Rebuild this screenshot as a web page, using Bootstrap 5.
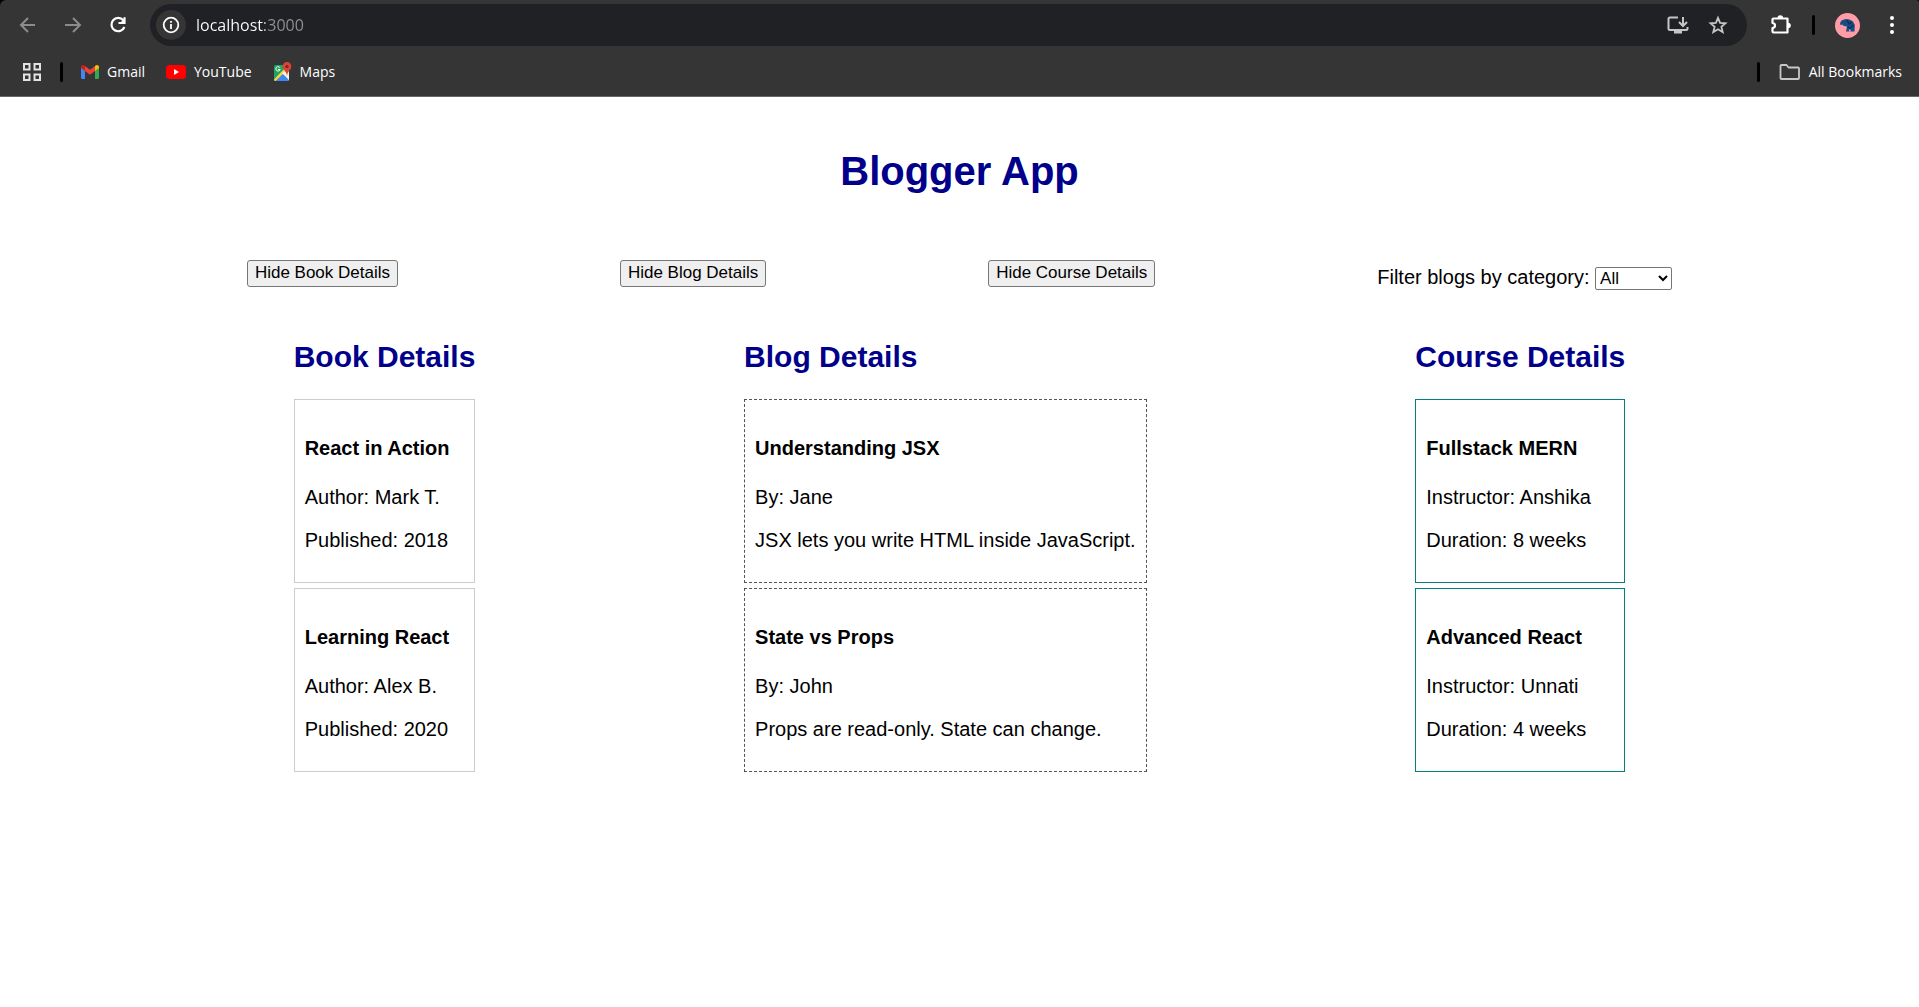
<!DOCTYPE html>
<html lang="en">
<head>
<meta charset="utf-8">
<meta name="viewport" content="width=device-width, initial-scale=1">
<title>Blogger App</title>
<link href="https://cdn.jsdelivr.net/npm/bootstrap@5.3.0/dist/css/bootstrap.min.css" rel="stylesheet">
<style>
  body { font-family: "Liberation Sans", Arial, sans-serif; font-size: 20px; line-height: 23px; color: #000; background: #fff; }
  .browser-wrap { background: #000; }
  .browser-ui { background: #353535; border-bottom: 1px solid #686868; font-family: "Open Sans", "Noto Sans", sans-serif; border-top-left-radius: 6px; border-top-right-radius: 3px; }
  .icon-btn { background: none; border: 0; padding: 0; display: flex; align-items: center; justify-content: center; min-width: 20px; height: 30px; }
  .tool-row { height: 50px; padding: 0 17px 0 18px; }
  .nav-icons { gap: 25px; }
  .omnibox { background: #202124; border-radius: 21px; height: 42px; padding: 0 19px 0 6px; margin: 0 23px 0 22px; }
  .site-info { width: 30px; border-radius: 50%; background: #353535; }
  .url-field { border: 0; outline: 0; padding: 0; margin-left: 10px; min-width: 0; font-size: 16px; line-height: 24px; color: transparent; background: linear-gradient(to right, #fff 69px, #929292 69px); -webkit-background-clip: text; background-clip: text; }
  .omni-icons { gap: 19px; }
  .menu-btn { margin-left: 22px; }
  .tool-bar-sep { margin: 0 20px; }
  .mark-row { height: 46px; padding: 0 17px 3px 22px; font-size: 14px; line-height: 20px; }
  .mark-row a { color: #fff; text-decoration: none; display: flex; align-items: center; gap: 8px; }
  .mark-links { gap: 21px; margin-left: 18px; }
  .mark-sep-start { margin-left: 18px; }
  .mark-sep-end { margin-right: 19px; }
  .vbar { width: 3px; height: 20px; border-radius: 2px; background: #000; }
  .app { padding: 25px; }
  .app h1 { font-size: 40px; line-height: 46px; font-weight: 700; color: #00008b; text-align: center; margin: 26px 0 66px; }
  .app h2 { font-size: 30px; line-height: 34px; font-weight: 700; color: #00008b; margin: 0 0 25px; }
  .spread { justify-content: space-evenly; }
  .controls { margin-bottom: 50px; }
  .plain-btn { font-size: 17px; line-height: 19px; padding: 2px 7px 4px; border: 1px solid #767676; border-radius: 3px; background: #efefef; color: #000; }
  .plain-select { font-size: 17px; line-height: 19px; width: 77px; height: 23px; border: 1px solid #767676; border-radius: 2px; background: #fff; color: #000; }
  .filter { padding-top: 6px; }
  .entry { border: 1px solid #ccc; padding: 10px; margin-bottom: 5px; }
  .entry h3 { font-size: 20px; line-height: 23px; font-weight: 700; margin: 27px 0 26px; }
  .entry p { margin: 0 0 20px; }
  .entry-blog { border: 1px dashed #555; }
  .entry-course { border-color: #008080; }
</style>
</head>
<body>
<header class="browser-wrap">
  <div class="browser-ui">
    <div class="tool-row d-flex align-items-center">
      <div class="nav-icons d-flex">
        <button class="icon-btn" aria-label="Back"><svg width="20" height="20" viewBox="0 0 20 20" fill="none" stroke="#8c8c8c" stroke-width="2"><path d="M17 10H4M10 3 3 10l7 7"/></svg></button>
        <button class="icon-btn" aria-label="Forward"><svg width="20" height="20" viewBox="0 0 20 20" fill="none" stroke="#8c8c8c" stroke-width="2"><path d="M2 10h14M10 3l7 7-7 7"/></svg></button>
        <button class="icon-btn" aria-label="Reload"><svg width="20" height="20" viewBox="0 0 20 20" fill="none" stroke="#fff" stroke-width="2.200"><path d="M15.300 5.200A6.700 6.700 0 1 0 16.400 12"/><path d="M16.500 2.200V8h-6" /><path d="M16.500 3.500V8H12z" fill="#fff" stroke="none"/></svg></button>
      </div>
      <div class="omnibox d-flex align-items-center flex-grow-1">
        <button class="icon-btn site-info flex-shrink-0" aria-label="Site information"><svg width="18" height="18" viewBox="0 0 18 18" fill="none" stroke="#fff" stroke-width="1.800"><circle cx="9" cy="9" r="7.300"/><path d="M9 8v5M9 5v1.800"/></svg></button>
        <input class="url-field flex-grow-1" type="text" aria-label="Address" value="localhost:3000">
        <div class="omni-icons d-flex">
          <button class="icon-btn" aria-label="Install app"><svg width="22" height="20" viewBox="0 0 22 20" fill="none" stroke="#c4c7c5" stroke-width="2"><path d="M11 2.500H3q-1.500 0-1.500 1.500v9.500Q1.500 15 3 15h16q1.500 0 1.500-1.500V12M16 2v8.500M12 7l4 4 4-4"/><path d="M7 15h8v3.500H7z" fill="#c4c7c5" stroke="none"/></svg></button>
          <button class="icon-btn" aria-label="Bookmark this page"><svg width="20" height="20" viewBox="0 0 20 20" fill="none" stroke="#c4c7c5" stroke-width="1.800"><path d="M10 2.800l2.100 5 5.400.5-4.100 3.500 1.300 5.300L10 14.200l-4.700 2.900 1.300-5.300-4.100-3.500 5.400-.5z"/></svg></button>
        </div>
      </div>
      <button class="icon-btn" aria-label="Extensions"><svg width="22" height="22" viewBox="0 0 22 22"><path d="M3.500 4.500h14v14h-14q-1 0-1-1v-3.500q2.500-.3 2.500-2.500t-2.500-2.500v-3.500q0-1 1-1z" fill="none" stroke="#fff" stroke-width="2.200" stroke-linejoin="round"/><path d="M7.500 4a2.800 2.800 0 0 1 5.600 0zM18 8.700a2.800 2.800 0 0 1 0 5.600z" fill="#fff"/></svg></button>
      <span class="vbar tool-bar-sep"></span>
      <button class="icon-btn" aria-label="Profile"><svg width="25" height="25" viewBox="0 0 25 25"><circle cx="12.500" cy="12.500" r="12.500" fill="#ff9ca6"/><path d="M5 10l1.500-2.500 4-1.500 4 .5 3.500 2 1.800 3.500-.3 6.500h-8.500l1-5-3-.5-2-1.500-1.500.8z" fill="#174d83"/><path d="M12 7l2 4 3-2M12.500 14l3 1 3-3" stroke="#0b2d57" stroke-width="1.200" fill="none"/><path d="M14 16.500h1.500v2H14z" fill="#ff9ca6"/></svg></button>
      <button class="icon-btn menu-btn" aria-label="Menu"><svg width="20" height="22" viewBox="0 0 20 22" fill="#fff"><circle cx="10" cy="4" r="2"/><circle cx="10" cy="11" r="2"/><circle cx="10" cy="18" r="2"/></svg></button>
    </div>
    <nav class="mark-row d-flex align-items-center" aria-label="Bookmarks">
      <button class="icon-btn" aria-label="Apps"><svg width="20" height="20" viewBox="0 0 20 20" fill="none" stroke="#e3e3e3" stroke-width="2"><path d="M2 2h5.500v5.500H2zM12.500 2H18v5.500h-5.500zM2 12.500h5.500V18H2zM12.500 12.500H18V18h-5.500z"/></svg></button>
      <span class="vbar mark-sep-start"></span>
      <div class="mark-links d-flex">
        <a href="#"><svg width="18" height="14" viewBox="0 0 18 14"><path d="M0 2v10.800Q0 14 1.200 14H4V5z" fill="#4285f4"/><path d="M18 2v10.800q0 1.200-1.200 1.200H14V5z" fill="#34a853"/><path d="M14 1v5l4-3V2q0-2-2-2-1 0-2 1z" fill="#fbbc04"/><path d="M4 1v5L0 3V2q0-2 2-2 1 0 2 1z" fill="#c5221f"/><path d="M4 1l5 3.800L14 1v5L9 9.800 4 6z" fill="#ea4335"/></svg>Gmail</a>
        <a href="#"><svg width="20" height="14" viewBox="0 0 20 14"><rect width="20" height="14" rx="3.500" fill="#f00"/><path d="M8 4l5 3-5 3z" fill="#fff"/></svg>YouTube</a>
        <a href="#"><svg width="19" height="20" viewBox="0 0 19 20"><rect x="1" y="3" width="15" height="16" rx="1.500" fill="#1fa463"/><path d="M2 19 9 11l7 8z" fill="#4285f4"/><path d="M10 10l6 8V8z" fill="#e8eaed"/><path d="M1 17.500 13 5l2 2L2.500 19q-1.500 0-1.500-1.500z" fill="#fdd835"/><path d="M9 11l7 7v-4l-4-4.500z" fill="#f5f5f5"/><path d="M7 5.800a2.200 2.200 0 1 0 .2 1.700H5" fill="none" stroke="#fff" stroke-width="1"/><path d="M14 0a4.300 4.300 0 0 1 4.300 4.300C18.300 8 14.500 9 14 14 13.500 9 9.700 8 9.700 4.300A4.300 4.300 0 0 1 14 0z" fill="#db4437"/><circle cx="14" cy="4.500" r="1.600" fill="#7b231e"/></svg>Maps</a>
      </div>
      <span class="vbar ms-auto mark-sep-end"></span>
      <a href="#"><svg width="22" height="18" viewBox="0 0 22 18" fill="none" stroke="#c7c7c7" stroke-width="1.800" stroke-linejoin="round"><path d="M2.500 2h5l2 2.500H19q1 0 1 1V15q0 1-1 1H2.500q-1 0-1-1V3q0-1 1-1z"/></svg>All Bookmarks</a>
    </nav>
  </div>
</header>
<main class="app">
  <h1>Blogger App</h1>
  <div class="controls d-flex spread align-items-start">
    <button class="plain-btn">Hide Book Details</button>
    <button class="plain-btn">Hide Blog Details</button>
    <button class="plain-btn">Hide Course Details</button>
    <div class="filter"><label for="category">Filter blogs by category:</label> <select id="category" class="plain-select"><option>All</option><option>React</option></select></div>
  </div>
  <div class="d-flex spread">
    <section>
      <h2>Book Details</h2>
      <article class="entry"><h3>React in Action</h3><p>Author: Mark T.</p><p>Published: 2018</p></article>
      <article class="entry"><h3>Learning React</h3><p>Author: Alex B.</p><p>Published: 2020</p></article>
    </section>
    <section>
      <h2>Blog Details</h2>
      <article class="entry entry-blog"><h3>Understanding JSX</h3><p>By: Jane</p><p>JSX lets you write HTML inside JavaScript.</p></article>
      <article class="entry entry-blog"><h3>State vs Props</h3><p>By: John</p><p>Props are read-only. State can change.</p></article>
    </section>
    <section>
      <h2>Course Details</h2>
      <article class="entry entry-course"><h3>Fullstack MERN</h3><p>Instructor: Anshika</p><p>Duration: 8 weeks</p></article>
      <article class="entry entry-course"><h3>Advanced React</h3><p>Instructor: Unnati</p><p>Duration: 4 weeks</p></article>
    </section>
  </div>
</main>
<script src="https://cdn.jsdelivr.net/npm/bootstrap@5.3.0/dist/js/bootstrap.bundle.min.js"></script>
</body>
</html>
